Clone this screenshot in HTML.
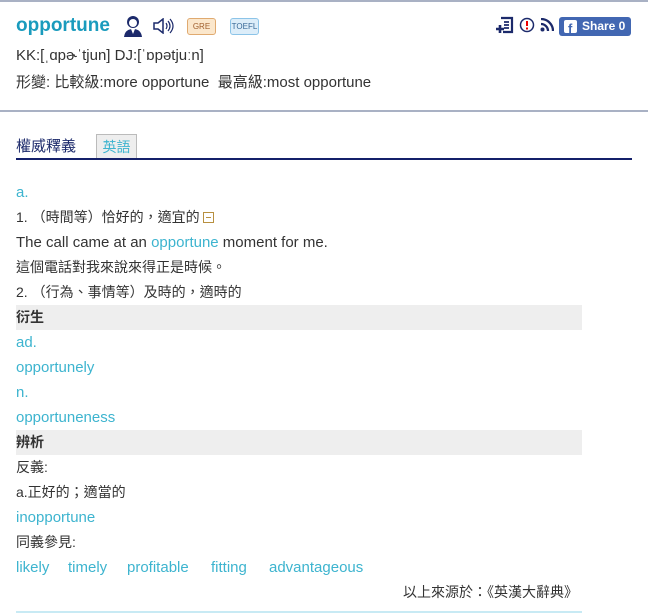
<!DOCTYPE html><html><head><meta charset="utf-8"><style>
body{margin:0;width:648px;height:615px;background:#fff;font-family:"Liberation Sans","Noto Sans CJK TC",sans-serif;color:#333;font-size:15px;position:relative;overflow:hidden}
.a{position:absolute}
.l{color:#3db4cf}
.row{position:absolute;left:16px;height:25px;line-height:25px;white-space:nowrap}
.bar{position:absolute;left:16px;width:566px;height:25px;background:#eee;line-height:25px;font-weight:bold;padding-left:0}
</style></head><body>
<div class="a" style="left:0;top:0;width:648px;height:2px;background:#a9b1c4"></div>
<div class="a" style="left:16px;top:15px;font-size:19px;font-weight:bold;color:#1a9bbd">opportune</div>
<svg class="a" style="left:123px;top:15px" width="20" height="22" viewBox="0 0 20 22"><circle cx="10" cy="7" r="6" fill="#1c2a6b"/><circle cx="10" cy="8" r="4" fill="#fff"/><path d="M1 22 Q2 14 10 14 Q18 14 19 22Z" fill="#1c2a6b"/><path d="M8 14 L10 19 L12 14Z" fill="#fff"/></svg>
<svg class="a" style="left:153px;top:18px" width="21" height="16" viewBox="0 0 21 16"><path d="M1 5h4l5-4v14l-5-4H1z" fill="none" stroke="#1c2a6b" stroke-width="1.5"/><path d="M13 5q2 3 0 6M15 3q4 5 0 10M17 1q6 7 0 14" fill="none" stroke="#1c2a6b" stroke-width="1.2"/></svg>
<div class="a" style="left:187px;top:18px;width:27px;height:15px;border:1px solid #e0aa70;border-radius:3px;background:#fbe7cc;font-size:8px;color:#a06030;text-align:center;line-height:15px">GRE</div>
<div class="a" style="left:230px;top:18px;width:27px;height:15px;border:1px solid #8cc4e8;border-radius:3px;background:#dcedf9;font-size:8px;color:#3a6a98;text-align:center;line-height:15px">TOEFL</div>
<div class="a" style="left:496px;top:16px;width:16px;height:18px"><svg width="18" height="18" viewBox="0 0 18 18"><path d="M5 2h11v14H7" fill="none" stroke="#1c2a6b" stroke-width="2.2"/><path d="M8 6h5M8 9h5M8 12h5" stroke="#1c2a6b" stroke-width="1.8"/><path d="M4 9v8M0 13h8" stroke="#1c2a6b" stroke-width="2.6"/></svg></div>
<svg class="a" style="left:519px;top:17px" width="16" height="16"><circle cx="8" cy="8" r="6.5" fill="#fff" stroke="#1c2a6b" stroke-width="1.5"/><rect x="7" y="4" width="2" height="5" fill="#e00"/><rect x="7" y="10.5" width="2" height="2" fill="#e00"/></svg>
<svg class="a" style="left:540px;top:18px" width="14" height="14"><circle cx="2.5" cy="11.5" r="2" fill="#1c2a6b"/><path d="M1 6a7 7 0 0 1 7 7M1 1a12 12 0 0 1 12 12" fill="none" stroke="#1c2a6b" stroke-width="2.3"/></svg>
<div class="a" style="left:559px;top:17px;width:72px;height:19px;background:#4267b2;border-radius:3px;color:#fff;font-weight:bold;font-size:12px;line-height:19px"><span style="position:absolute;left:5px;top:3px;width:13px;height:13px;background:#fff;border-radius:2px"></span><span style="position:absolute;left:9px;top:2px;color:#4267b2;font-size:13px">f</span><span style="position:absolute;left:23px">Share 0</span></div>
<div class="a" style="left:16px;top:47px;line-height:18px">KK:[ˌɑpɚˈtjun] DJ:[ˈɒpətjuːn]</div>
<div class="a" style="left:16px;top:74px;line-height:18px">形變: 比較級:more opportune&nbsp; 最高級:most opportune</div>
<div class="a" style="left:0;top:110px;width:648px;height:2px;background:#a9b1c4"></div>
<div class="a" style="left:16px;top:135px;font-size:15px;color:#1c2a6b">權威釋義</div>
<div class="a" style="left:96px;top:134px;width:39px;height:23px;background:#eee;border:1px solid #bbb;border-bottom:none;color:#3db4cf;text-align:center;line-height:24px;font-size:14px">英語</div>
<div class="a" style="left:16px;top:158px;width:616px;height:2px;background:#14206a"></div>
<div class="row l" style="top:180px">a.</div>
<div class="row" style="top:205px;font-size:14px">1. （時間等）恰好的，適宜的 <span style="display:inline-block;width:9px;height:9px;border:1px solid #b89040;vertical-align:-1px;position:relative"><span style="position:absolute;left:2px;top:4px;width:5px;height:1px;background:#b89040"></span></span></div>
<div class="row" style="top:230px">The call came at an <span class="l">opportune</span> moment for me.</div>
<div class="row" style="top:255px;font-size:14px">這個電話對我來說來得正是時候。</div>
<div class="row" style="top:280px;font-size:14px">2. （行為、事情等）及時的，適時的</div>
<div class="bar" style="top:305px;font-size:14px">衍生</div>
<div class="row l" style="top:330px">ad.</div>
<div class="row l" style="top:355px">opportunely</div>
<div class="row l" style="top:380px">n.</div>
<div class="row l" style="top:405px">opportuneness</div>
<div class="bar" style="top:430px;font-size:14px">辨析</div>
<div class="row" style="top:455px;font-size:14px">反義:</div>
<div class="row" style="top:480px;font-size:14px">a.正好的；適當的</div>
<div class="row l" style="top:505px">inopportune</div>
<div class="row" style="top:530px;font-size:14px">同義參見:</div>
<div class="row l" style="top:555px">likely</div>
<div class="row l" style="top:555px;left:68px">timely</div>
<div class="row l" style="top:555px;left:127px">profitable</div>
<div class="row l" style="top:555px;left:211px">fitting</div>
<div class="row l" style="top:555px;left:269px">advantageous</div>
<div class="a" style="right:70px;top:580px;line-height:25px;font-size:14px">以上來源於：《英漢大辭典》</div>
<div class="a" style="left:16px;top:611px;width:566px;height:2px;background:#c8eaf4"></div>
</body></html>
